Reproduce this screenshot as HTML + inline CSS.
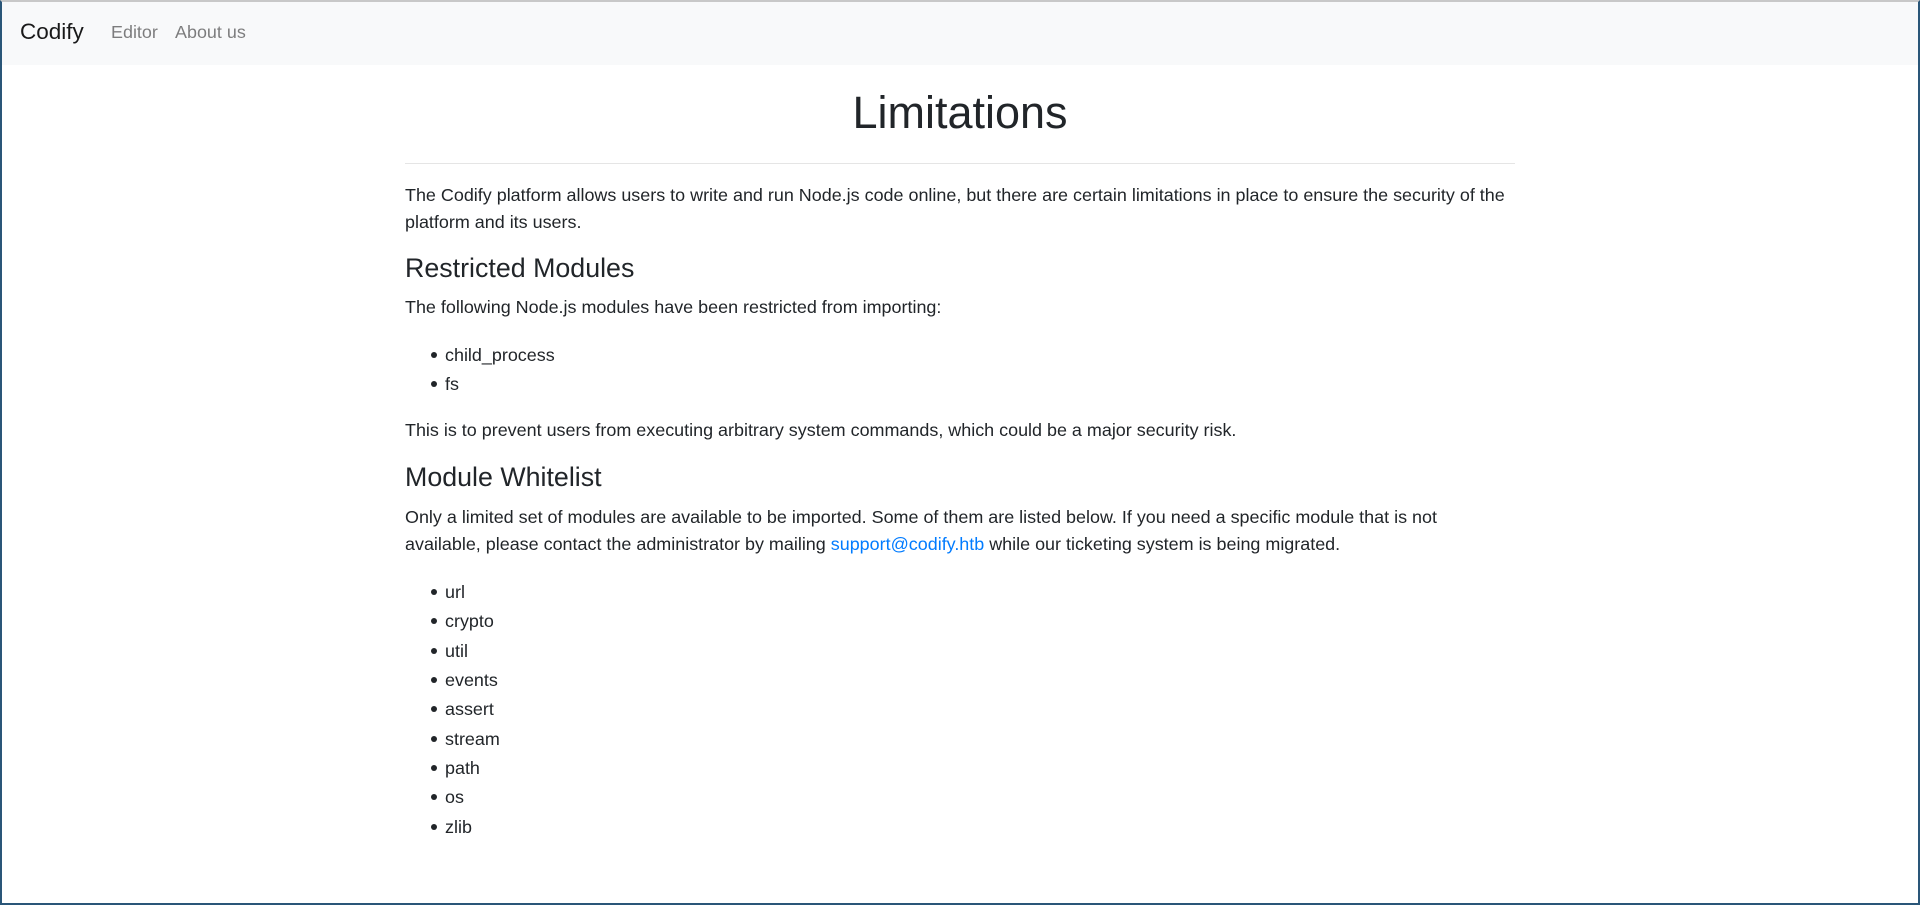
<!DOCTYPE html>
<html><head><meta charset="utf-8"><style>
html,body{margin:0;padding:0}
body{width:1920px;height:905px;position:relative;overflow:hidden;background:#fff;font-family:"Liberation Sans",sans-serif;color:#212529;font-size:17.95px}
.frame{position:absolute;inset:0;border-left:2px solid #2a5678;border-right:2px solid #2a5678;border-bottom:2px solid #2a5678;border-top:2px solid #c8c8c8;box-sizing:border-box;pointer-events:none;z-index:5}
.nav{position:absolute;left:0;top:0;width:1920px;height:65px;background:#f8f9fa}
.t{position:absolute;white-space:nowrap;line-height:30px;height:30px}
a{color:#007bff;text-decoration:none}
.li::before{content:"";position:absolute;left:-14px;top:12px;width:6px;height:6px;border-radius:50%;background:#212529}
</style></head><body>
<div class="nav"></div>
<div class="t" style="left:20px;top:17px;font-size:22.5px;color:rgba(0,0,0,.9)">Codify</div>
<div class="t" style="left:111px;top:17px;color:rgba(0,0,0,.5)">Editor</div>
<div class="t" style="left:175px;top:17px;color:rgba(0,0,0,.5)">About us</div>
<div class="t" style="left:0;width:1920px;text-align:center;top:88px;height:50px;line-height:50px;font-size:45px;font-weight:300">Limitations</div>
<div style="position:absolute;left:405px;width:1110px;top:163px;border-top:1px solid #e5e5e5"></div>
<div class="t" style="left:405px;top:180px">The Codify platform allows users to write and run Node.js code online, but there are certain limitations in place to ensure the security of the</div>
<div class="t" style="left:405px;top:207px">platform and its users.</div>
<div class="t" style="left:405px;top:251px;font-size:26.8px;height:34px;line-height:34px">Restricted Modules</div>
<div class="t" style="left:405px;top:292px">The following Node.js modules have been restricted from importing:</div>
<div class="t li" style="left:445px;top:340px">child_process</div>
<div class="t li" style="left:445px;top:369px">fs</div>
<div class="t" style="left:405px;top:415px">This is to prevent users from executing arbitrary system commands, which could be a major security risk.</div>
<div class="t" style="left:405px;top:460px;font-size:26.8px;height:34px;line-height:34px">Module Whitelist</div>
<div class="t" style="left:405px;top:502px">Only a limited set of modules are available to be imported. Some of them are listed below. If you need a specific module that is not</div>
<div class="t" style="left:405px;top:529px">available, please contact the administrator by mailing <a>support@codify.htb</a> while our ticketing system is being migrated.</div>
<div class="t li" style="left:445px;top:577px">url</div>
<div class="t li" style="left:445px;top:606px">crypto</div>
<div class="t li" style="left:445px;top:636px">util</div>
<div class="t li" style="left:445px;top:665px">events</div>
<div class="t li" style="left:445px;top:694px">assert</div>
<div class="t li" style="left:445px;top:724px">stream</div>
<div class="t li" style="left:445px;top:753px">path</div>
<div class="t li" style="left:445px;top:782px">os</div>
<div class="t li" style="left:445px;top:812px">zlib</div>
<div class="frame"></div>
</body></html>
